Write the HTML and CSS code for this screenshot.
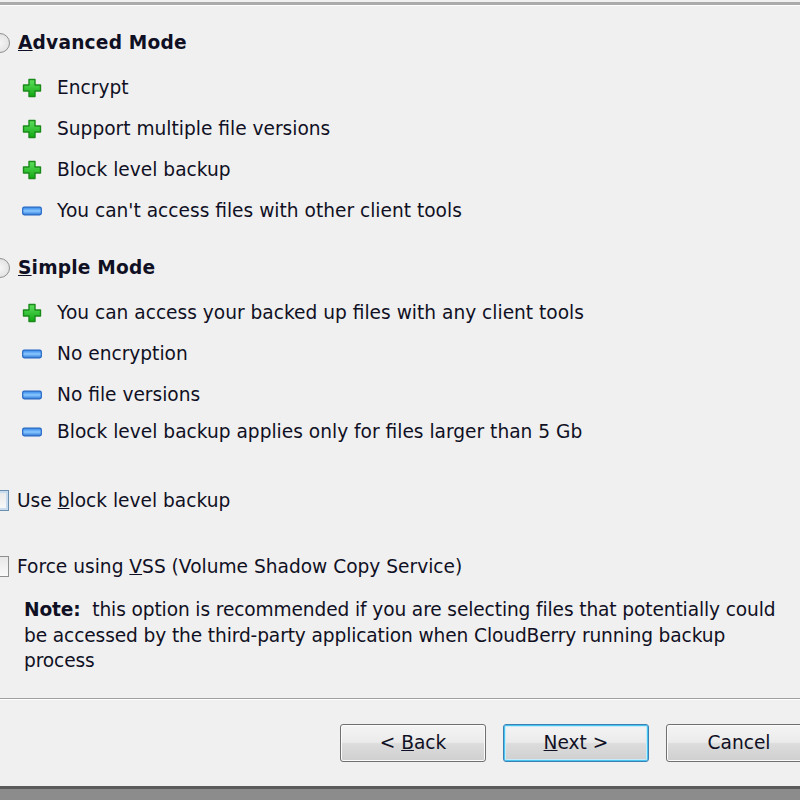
FILE: index.html
```html
<!DOCTYPE html>
<html lang="en">
  <head>
    <meta charset="UTF-8" />
    <title>Backup Mode</title>
    <link rel="stylesheet" href="styles.css">
  </head>
  <body>
    <div class="dialog">
      <div class="content">
        <div class="mode">
          <span class="radio"></span>
          <span class="mode-title"><u>A</u>dvanced Mode</span>
        </div>
        <ul class="features">
          <li><svg class="icon" viewBox="0 0 20 20"><use href="#plus" /></svg>Encrypt</li>
          <li><svg class="icon" viewBox="0 0 20 20"><use href="#plus" /></svg>Support multiple file versions</li>
          <li><svg class="icon" viewBox="0 0 20 20"><use href="#plus" /></svg>Block level backup</li>
          <li><svg class="icon" viewBox="0 0 20 20"><use href="#minus" /></svg>You can't access files with other client tools</li>
        </ul>

        <div class="mode simple">
          <span class="radio"></span>
          <span class="mode-title"><u>S</u>imple Mode</span>
        </div>
        <ul class="features simple-list">
          <li><svg class="icon" viewBox="0 0 20 20"><use href="#plus" /></svg>You can access your backed up files with any client tools</li>
          <li><svg class="icon" viewBox="0 0 20 20"><use href="#minus" /></svg>No encryption</li>
          <li><svg class="icon" viewBox="0 0 20 20"><use href="#minus" /></svg>No file versions</li>
          <li><svg class="icon" viewBox="0 0 20 20"><use href="#minus" /></svg>Block level backup applies only for files larger than 5 Gb</li>
        </ul>

        <div class="check first">
          <span class="box checked"></span>
          <span>Use <u>b</u>lock level backup</span>
        </div>
        <div class="check">
          <span class="box"></span>
          <span>Force using <u>V</u>SS (Volume Shadow Copy Service)</span>
        </div>
        <p class="note">
          <b>Note:</b>&nbsp; this option is recommended if you are selecting files that potentially could<br>
          be accessed by the third-party application when CloudBerry running backup<br>
          process
        </p>
      </div>

      <div class="footer">
        <button class="btn">&lt; <u>B</u>ack</button>
        <button class="btn default"><u>N</u>ext &gt;</button>
        <button class="btn">Cancel</button>
      </div>
      <div class="frame"></div>
    </div>

    <svg class="defs" width="0" height="0">
      <defs>
        <linearGradient id="g-green" x1="0" y1="0" x2="0" y2="1">
          <stop offset="0" stop-color="#5fe05f" />
          <stop offset="1" stop-color="#12a812" />
        </linearGradient>
        <linearGradient id="g-blue" x1="0" y1="0" x2="0" y2="1">
          <stop offset="0" stop-color="#2f86e8" />
          <stop offset="0.5" stop-color="#8cc8ff" />
          <stop offset="1" stop-color="#2a78d8" />
        </linearGradient>
        <symbol id="plus" viewBox="0 0 20 20">
          <path d="M7 1.5h6v5.5h5.5v6h-5.5v5.5h-6v-5.5h-5.5v-6h5.5z" fill="url(#g-green)" stroke="#1b8a1b" stroke-width="1.4" stroke-linejoin="round" />
        </symbol>
        <symbol id="minus" viewBox="0 0 20 20">
          <rect x="0.7" y="6.2" width="18.6" height="7.6" rx="1.5" fill="url(#g-blue)" stroke="#2366c4" stroke-width="1.2" />
        </symbol>
      </defs>
    </svg>
  </body>
</html>
```

FILE: styles.css
```css
body {
  margin: 0;
  background: #f0f0f0;
  overflow: hidden;
  font-family: "DejaVu Sans", Verdana, sans-serif;
  font-size: 18.6px;
  color: #101024;
}
.dialog {
  margin-top: 2px;
  border-top: 3px solid #ababab;
  box-shadow: inset 0 1px #ffffff;
  height: 798px;
  display: flex;
  flex-direction: column;
}
.content {
  padding-top: 17px;
  height: 670px;
}
.mode {
  height: 41px;
  display: flex;
  align-items: center;
  gap: 8px;
}
.mode.simple {
  margin-top: 16px;
}
.radio {
  width: 18px;
  height: 18px;
  margin-left: -10px;
  border: 1px solid #8e8f8f;
  border-radius: 50%;
  background: radial-gradient(#f6f6f6, #dcdcdc);
}
.mode-title {
  font-weight: bold;
  letter-spacing: 0.2px;
}
.features {
  list-style: none;
  margin: 4px 0 0;
  padding: 0 0 0 22px;
}
.features li {
  height: 41px;
  display: flex;
  align-items: center;
  gap: 15px;
}
.simple-list li:last-child {
  margin-top: -4px;
}
.icon {
  width: 20px;
  height: 20px;
  flex: none;
}
.check {
  height: 41px;
  display: flex;
  align-items: center;
  gap: 8px;
  margin-top: 25px;
}
.check.first {
  margin-top: 28px;
}
.box {
  width: 13px;
  height: 19px;
  margin-left: -6px;
  border: 1px solid #8e8f8f;
  background: linear-gradient(#e8e8e8, #fafafa);
}
.box.checked {
  border-color: #6b8eae;
  box-shadow: inset 0 0 0 2px #c9dcef;
}
.note {
  margin: 10px 0 0;
  padding-left: 24px;
  white-space: nowrap;
  line-height: 25.5px;
  letter-spacing: -0.12px;
}
.footer {
  height: 90px;
  border-top: 1px solid #a0a0a0;
  box-shadow: inset 0 1px #ffffff;
  display: flex;
  gap: 17px;
  padding: 25px 0 0 340px;
  box-sizing: border-box;
  margin-top: 20px;
}
.btn {
  flex: none;
  width: 146px;
  height: 38px;
  font: inherit;
  color: inherit;
  border: 1px solid #707070;
  border-radius: 3px;
  background: linear-gradient(#f4f4f4 0%, #ebebeb 48%, #dcdcdc 52%, #cfcfcf 100%);
  box-shadow: inset 0 0 0 1px #fbfbfb;
}
.btn.default {
  border-color: #3c7fb1;
  box-shadow: inset 0 0 0 1px #48c4f0, inset 0 0 0 2px #c6ebfb;
}
.frame {
  height: 14px;
  border-top: 3px solid #5a5a5a;
  background: #8c8c8c;
}
.defs {
  position: absolute;
}
```
